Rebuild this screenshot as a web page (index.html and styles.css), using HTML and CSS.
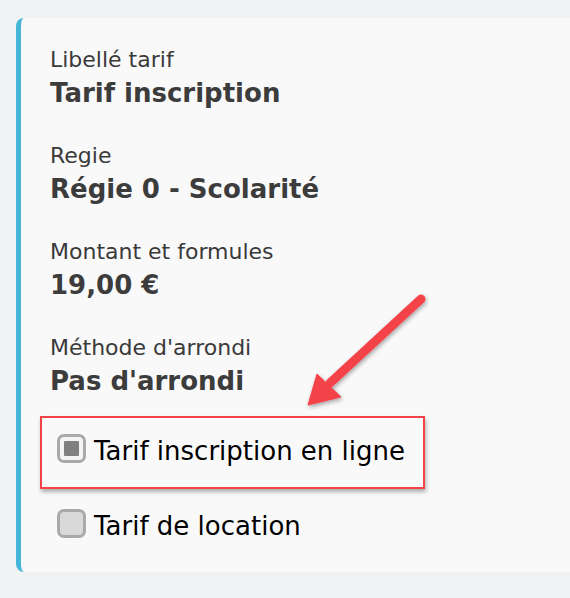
FILE: index.html
```html
<!DOCTYPE html>
<html lang="fr">
<head>
    <meta charset="UTF-8">
    <meta name="viewport" content="width=device-width, initial-scale=1.0">
    <link rel="stylesheet" href="styles.css">
</head>
<body>
    <div class="page">
        <div class="card">
            <div class="field">
                <div class="field-label">Libellé tarif</div>
                <div class="field-value">Tarif inscription</div>
            </div>
            <div class="field">
                <div class="field-label">Regie</div>
                <div class="field-value">Régie 0 - Scolarité</div>
            </div>
            <div class="field">
                <div class="field-label">Montant et formules</div>
                <div class="field-value">19,00 €</div>
            </div>
            <div class="field">
                <div class="field-label">Méthode d'arrondi</div>
                <div class="field-value">Pas d'arrondi</div>
            </div>

            <div class="check-row first">
                <span class="check checked"><span class="check-mark"></span></span>
                <span class="check-text">Tarif inscription en ligne</span>
            </div>
            <div class="check-row">
                <span class="check"></span>
                <span class="check-text">Tarif de location</span>
            </div>
        </div>

        <!-- annotation drawn over the screenshot -->
        <div class="highlight"></div>
        <svg class="arrow" width="570" height="598" viewBox="0 0 570 598">
            <defs>
                <filter id="shadow" x="-20%" y="-20%" width="140%" height="140%">
                    <feDropShadow dx="1" dy="2" stdDeviation="2" flood-color="#000" flood-opacity="0.35"/>
                </filter>
            </defs>
            <g filter="url(#shadow)" fill="#f4424a" stroke="#f4424a">
                <line x1="421" y1="299" x2="330" y2="383" stroke-width="9" stroke-linecap="round"/>
                <polygon points="317,374 341,397 308,405" stroke-width="1" stroke-linejoin="round"/>
            </g>
        </svg>
    </div>
</body>
</html>
```

FILE: styles.css
```css
body {
    margin: 0;
    padding: 0;
    background-color: #f1f2f4;
    font-family: "DejaVu Sans", Verdana, sans-serif;
}

.page {
    position: relative;
    width: 570px;
    height: 598px;
    overflow: hidden;
    padding: 18px 0 0 16px;
    box-sizing: border-box;
}

.card {
    background-color: #f9f9f9;
    border-left: 5px solid #45b5d8;
    border-radius: 8px 0 0 8px;
    padding: 26px 0 28px 29px;
    width: 600px;
}

.field {
    margin-bottom: 30px;
}

.field-label {
    font-size: 22px;
    line-height: 32px;
    color: #3a3a3a;
}

.field-value {
    font-size: 26px;
    line-height: 34px;
    font-weight: bold;
    color: #3c3c3c;
}

.check-row {
    display: flex;
    align-items: flex-start;
    margin-top: 39px;
    padding-left: 7px;
}

.check-row.first {
    margin-top: 35px;
}

.check {
    width: 29px;
    height: 29px;
    box-sizing: border-box;
    border: 3px solid #a9a9a9;
    border-radius: 7px;
    background-color: #d9d9d9;
    margin-top: 1px;
    margin-right: 8px;
    display: flex;
    align-items: center;
    justify-content: center;
}

.check.checked {
    background-color: #f4f4f4;
}

.check-mark {
    width: 15px;
    height: 15px;
    background-color: #808080;
    border-radius: 1px;
}

.check-text {
    font-size: 26px;
    line-height: 36px;
    color: #000;
}

.highlight {
    position: absolute;
    left: 40px;
    top: 416px;
    width: 385px;
    height: 73px;
    box-sizing: border-box;
    border: 2px solid #f4424a;
    box-shadow: 1px 3px 4px rgba(0, 0, 0, 0.3);
}

.arrow {
    position: absolute;
    left: 0;
    top: 0;
}
```
